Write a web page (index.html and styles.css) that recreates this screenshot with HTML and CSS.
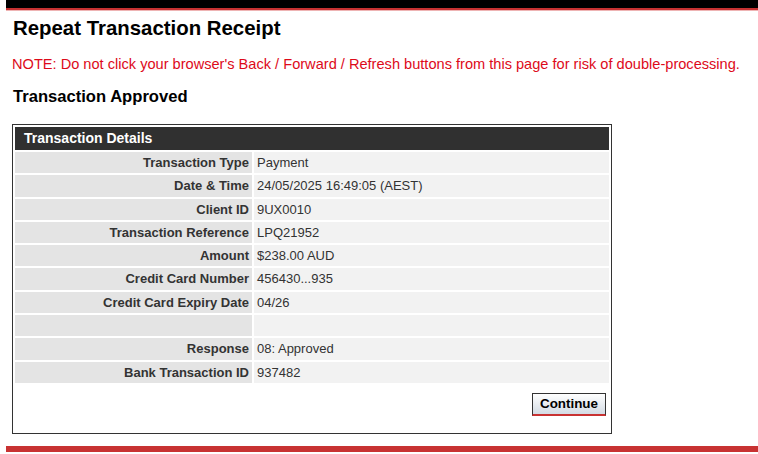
FILE: index.html
```html
<!DOCTYPE html>
<html lang="en">
<head>
    <meta charset="UTF-8">
    <title>Repeat Transaction Receipt</title>
    <link rel="stylesheet" href="styles.css">
</head>
<body>
    <div class="topbar"></div>

    <div class="content">
        <h1 class="title">Repeat Transaction Receipt</h1>

        <p class="note">NOTE: Do not click your browser's Back / Forward / Refresh buttons from this page for risk of double-processing.</p>

        <h2 class="status">Transaction Approved</h2>

        <div class="receipt">
            <div class="receipt__header">Transaction Details</div>

            <div class="receipt__rows">
                <div class="receipt__label">Transaction Type</div>
                <div class="receipt__value">Payment</div>

                <div class="receipt__label">Date &amp; Time</div>
                <div class="receipt__value">24/05/2025 16:49:05 (AEST)</div>

                <div class="receipt__label">Client ID</div>
                <div class="receipt__value">9UX0010</div>

                <div class="receipt__label">Transaction Reference</div>
                <div class="receipt__value">LPQ21952</div>

                <div class="receipt__label">Amount</div>
                <div class="receipt__value">$238.00 AUD</div>

                <div class="receipt__label">Credit Card Number</div>
                <div class="receipt__value">456430...935</div>

                <div class="receipt__label">Credit Card Expiry Date</div>
                <div class="receipt__value">04/26</div>

                <div class="receipt__label"></div>
                <div class="receipt__value"></div>

                <div class="receipt__label">Response</div>
                <div class="receipt__value">08: Approved</div>

                <div class="receipt__label">Bank Transaction ID</div>
                <div class="receipt__value">937482</div>
            </div>

            <div class="receipt__actions">
                <div class="button">Continue</div>
            </div>
        </div>
    </div>

    <div class="bottombar"></div>
</body>
</html>
```

FILE: styles.css
```css
html {
    height: 100%;
}

body {
    margin: 0;
    font-family: "Liberation Sans", Arial, sans-serif;
    color: #000;
    background: #fff;
}

.topbar {
    height: 8px;
    margin-left: 6px;
    background: #000;
    border-bottom: 2px solid #c83232;
    box-shadow: 0 1px 0 #eeb4b4;
}

.content {
    padding: 0 12px;
}

.title {
    margin: 7px 0 0 1px;
    font-size: 20.4px;
    line-height: 23px;
    font-weight: bold;
}

.note {
    margin: 16px 0 0;
    font-size: 14.6px;
    line-height: 16px;
    color: #dd0a1a;
}

.status {
    margin: 16px 0 0 1px;
    font-size: 16.6px;
    line-height: 18px;
    font-weight: bold;
}

.receipt {
    width: 594px;
    margin-top: 18px;
    padding: 2px;
    border: 1px solid #333;
}

.receipt__header {
    height: 23px;
    line-height: 23px;
    padding-left: 9px;
    background: #303030;
    color: #fff;
    font-size: 14px;
    font-weight: bold;
}

.receipt__rows {
    display: grid;
    grid-template-columns: 237px 1fr;
    grid-auto-rows: 21.3px;
    gap: 2px 2px;
    margin-top: 2px;
    font-size: 13px;
    color: #333;
}

.receipt__label,
.receipt__value {
    line-height: 21.3px;
    white-space: nowrap;
}

.receipt__label {
    padding-right: 3px;
    text-align: right;
    font-weight: bold;
    background: #e4e4e4;
}

.receipt__value {
    padding-left: 3px;
    background: #f2f2f2;
}

.receipt__actions {
    display: flex;
    justify-content: flex-end;
    padding: 10px 3px 15px 0;
}

.button {
    -moz-user-select: none;
    -webkit-user-select: none;
    user-select: none;
    cursor: pointer;
    height: 20px;
    line-height: 20px;
    padding: 0 7px;
    border: 1px solid #333;
    border-bottom: 2px solid #c83232;
    background: linear-gradient(#ffffff, #d3dbe4);
    font-size: 13.4px;
    font-weight: bold;
    color: #000;
}

.bottombar {
    height: 6px;
    margin: 12px 0 0 6px;
    background: #c83232;
}
```
